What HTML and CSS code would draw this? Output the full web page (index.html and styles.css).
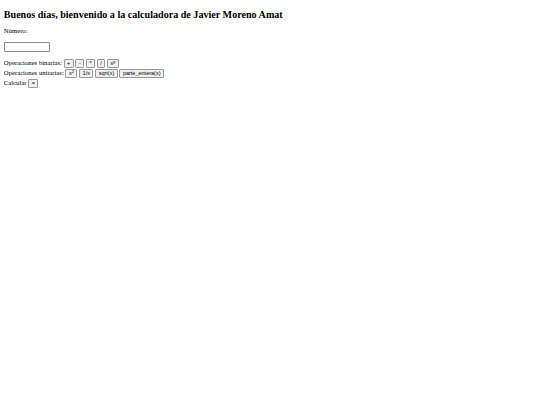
FILE: index.html
```html
<!DOCTYPE html>
<html lang="es">
<head>
<meta charset="utf-8">
<title>Calculadora</title>
<link rel="stylesheet" href="styles.css">
</head>
<body>
<h2 class="title">Buenos días, bienvenido a la calculadora de Javier Moreno Amat</h2>
<p class="label">Número:</p>
<p class="field"><input class="num" type="text"></p>
<div class="row">Operaciones binarias: <button class="btn">+</button> <button class="btn">-</button> <button class="btn">*</button> <button class="btn">/</button> <button class="btn">x<sup>y</sup></button></div>
<div class="row">Operaciones unitarias: <button class="btn">x<sup>2</sup></button> <button class="btn">1/x</button> <button class="btn">sqrt(x)</button> <button class="btn">parte_entera(x)</button></div>
<div class="row">Calcular <button class="btn">=</button></div>
</body>
</html>
```

FILE: styles.css
```css
html { background: #fff; }
body {
  margin: 3.8px;
  font-family: "Liberation Serif", "Times New Roman", serif;
  font-size: 6.7px;
  color: #000;
}
.title {
  font-size: 10.1px;
  font-weight: bold;
  margin: 5.3px 0 7.3px;
}
.label { margin: 0 0 8px; }
.field { margin: 0 0 6.6px; line-height: 0; }
.num {
  box-sizing: border-box;
  width: 46px;
  height: 9.5px;
  margin: 0;
  padding: 0 1px;
  border: 1px solid #8a8a8a;
  border-radius: 1px;
  background: #fff;
  font-size: 5.5px;
}
.row {
  line-height: 10px;
  height: 10px;
}
.btn {
  font-family: "Liberation Sans", Arial, sans-serif;
  font-size: 5.5px;
  line-height: 6.5px;
  padding: 0.5px 2.5px;
  margin: 0;
  border: 1px solid #9a9a9a;
  border-radius: 1px;
  background: #efefef;
  color: #000;
  vertical-align: baseline;
}
.btn sup {
  font-size: 4px;
  line-height: 0;
  vertical-align: 2px;
}
```
